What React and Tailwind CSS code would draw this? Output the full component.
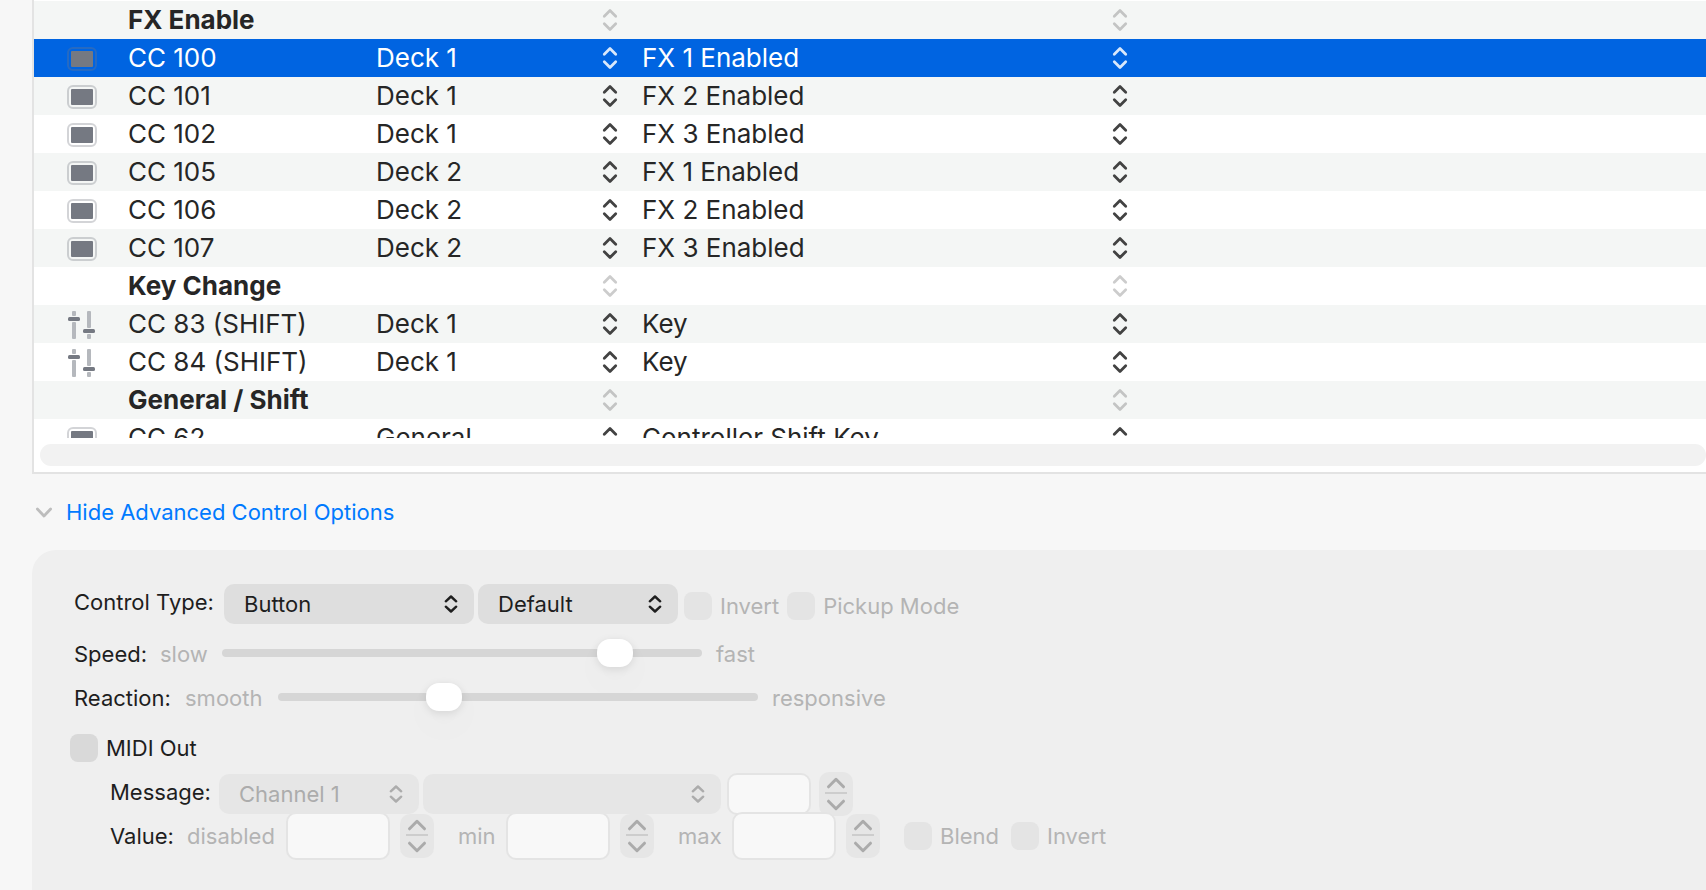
import { useState } from 'react'

const MAPPINGS = [
    { id: 'fx', group: 'FX Enable' },
    { id: 'cc100', icon: 'pad', name: 'CC 100', deck: 'Deck 1', action: 'FX 1 Enabled' },
    { id: 'cc101', icon: 'pad', name: 'CC 101', deck: 'Deck 1', action: 'FX 2 Enabled' },
    { id: 'cc102', icon: 'pad', name: 'CC 102', deck: 'Deck 1', action: 'FX 3 Enabled' },
    { id: 'cc105', icon: 'pad', name: 'CC 105', deck: 'Deck 2', action: 'FX 1 Enabled' },
    { id: 'cc106', icon: 'pad', name: 'CC 106', deck: 'Deck 2', action: 'FX 2 Enabled' },
    { id: 'cc107', icon: 'pad', name: 'CC 107', deck: 'Deck 2', action: 'FX 3 Enabled' },
    { id: 'key', group: 'Key Change' },
    { id: 'cc83', icon: 'fader', name: 'CC 83 (SHIFT)', deck: 'Deck 1', action: 'Key' },
    { id: 'cc84', icon: 'fader', name: 'CC 84 (SHIFT)', deck: 'Deck 1', action: 'Key' },
    { id: 'general', group: 'General / Shift' },
    { id: 'cc62', icon: 'pad', name: 'CC 62', deck: 'General', action: 'Controller Shift Key' },
]

function PadIcon() {
    return (
        <svg width="30" height="28" viewBox="0 0 30 28" className="block">
            <rect x="1" y="4" width="28" height="22" rx="5" fill="none" stroke="#757982" strokeOpacity="0.32" strokeWidth="2" />
            <rect x="4" y="7" width="22" height="16" rx="1" fill="#757982" />
        </svg>
    )
}

function FaderIcon() {
    return (
        <svg width="30" height="30" viewBox="0 0 30 30" className="block">
            <g fill="#b5b8bd">
                <rect x="5" y="2" width="4" height="5" rx="1" />
                <rect x="5" y="13" width="4" height="17" rx="1" />
                <rect x="20" y="2" width="4" height="17" rx="1" />
                <rect x="20" y="25" width="4" height="5" rx="1" />
            </g>
            <g fill="#757982">
                <rect x="1" y="8" width="12" height="4" rx="1.5" />
                <rect x="16" y="20" width="12" height="4" rx="1.5" />
            </g>
        </svg>
    )
}

// Up/down arrows at the end of a pop-up menu inside the table
function RowArrows({ className }) {
    return (
        <svg width="16" height="24" viewBox="0 0 16 24" fill="none" stroke="currentColor" strokeWidth="2.8" strokeLinecap="round" strokeLinejoin="round" className={className}>
            <path d="M2.3 8.2 8 2.6l5.7 5.6M2.3 15.8 8 21.4l5.7-5.600" />
        </svg>
    )
}

function MenuArrows({ className }) {
    return (
        <svg width="16" height="20" viewBox="0 0 16 20" fill="none" stroke="currentColor" strokeWidth="2.4" strokeLinecap="round" strokeLinejoin="round" className={className}>
            <path d="M2.8 7.3 8 2.5l5.2 4.8M2.8 12.7 8 17.5l5.2-4.8" />
        </svg>
    )
}

function RowSelect({ label, value, disabled, selected, className }) {
    const arrows = disabled ? 'text-black/20' : selected ? 'text-white/85' : 'text-[#424242]'
    return (
        <div className={`relative flex h-[38px] items-center ${className}`}>
            <select aria-label={label} disabled={disabled} className="h-full w-full appearance-none bg-transparent outline-none">
                <option>{value || ''}</option>
            </select>
            <RowArrows className={`pointer-events-none absolute right-0 ${arrows}`} />
        </div>
    )
}

function Menu({ label, value, disabled, className }) {
    return (
        <div className={`relative flex h-10 shrink-0 items-center rounded-[10px] ${disabled ? 'bg-[#e6e6e6] text-[#acacac]' : 'bg-[#dedede] text-[#1e1e1e]'} ${className}`}>
            <select aria-label={label} disabled={disabled} className="h-full w-full appearance-none bg-transparent pl-5 opacity-100 outline-none">
                <option>{value}</option>
            </select>
            <MenuArrows className="pointer-events-none absolute right-[15px]" />
        </div>
    )
}

function Check({ label, disabled }) {
    return (
        <label className={`flex items-center gap-2 ${disabled ? 'text-[#b4b4b4]' : ''}`}>
            <input
                type="checkbox"
                disabled={disabled}
                className={`size-7 shrink-0 appearance-none rounded-lg ${disabled ? 'bg-[#e4e4e4]' : 'bg-[#d9d9d9]'}`}
            />
            {label}
        </label>
    )
}

function Slider({ label, value, onChange }) {
    return (
        <input
            type="range"
            aria-label={label}
            min="0"
            max="1000"
            value={value}
            onChange={(e) => onChange(Number(e.target.value))}
            className="h-7 w-[480px] shrink-0 appearance-none bg-transparent [&::-webkit-slider-runnable-track]:h-2 [&::-webkit-slider-runnable-track]:rounded-full [&::-webkit-slider-runnable-track]:bg-[#d6d6d6] [&::-webkit-slider-thumb]:-mt-2.5 [&::-webkit-slider-thumb]:h-7 [&::-webkit-slider-thumb]:w-9 [&::-webkit-slider-thumb]:appearance-none [&::-webkit-slider-thumb]:rounded-[13px] [&::-webkit-slider-thumb]:bg-white [&::-webkit-slider-thumb]:shadow-[0_2px_8px_rgba(0,0,0,0.1),0_14px_40px_rgba(0,0,0,0.03)]"
        />
    )
}

function NumberBox({ label, className }) {
    return (
        <input
            type="text"
            aria-label={label}
            disabled
            className={`shrink-0 rounded-[10px] border-2 border-[#e4e4e4] bg-[#f8f8f8] px-2 ${className}`}
        />
    )
}

function Stepper({ label }) {
    return (
        <div className="flex h-11 w-[34px] shrink-0 flex-col items-center rounded-[10px] bg-[#e6e6e6] text-[#ababab]">
            <button disabled aria-label={`Increase ${label}`} className="flex flex-1 items-end pb-[3px]">
                <svg width="20" height="12" viewBox="0 0 20 12" fill="none" stroke="currentColor" strokeWidth="3" strokeLinecap="round" strokeLinejoin="round">
                    <path d="M2.5 9.8 10 2.3l7.5 7.5" />
                </svg>
            </button>
            <div className="h-0.5 w-[22px] bg-[#cdcdcd]" />
            <button disabled aria-label={`Decrease ${label}`} className="flex flex-1 items-start pt-[5px]">
                <svg width="20" height="12" viewBox="0 0 20 12" fill="none" stroke="currentColor" strokeWidth="3" strokeLinecap="round" strokeLinejoin="round">
                    <path d="M2.5 2.2 10 9.7l7.5-7.5" />
                </svg>
            </button>
        </div>
    )
}

function MappingTable({ selectedId, onSelect }) {
    return (
        <div className="border-b-2 border-l-2 border-[#e3e3e3] bg-white pb-1.5">
            <div className="h-[438px] overflow-hidden pt-px">
                <table className="w-full table-fixed border-collapse text-[26px] leading-[38px]">
                    <colgroup>
                        <col className="w-[94px]" />
                        <col className="w-[248px]" />
                        <col className="w-[266px]" />
                        <col />
                    </colgroup>
                    <tbody>
                        {MAPPINGS.map((row) => {
                            const selected = row.id === selectedId
                            return (
                                <tr
                                    key={row.id}
                                    onClick={() => onSelect(row.id)}
                                    className={`h-[38px] ${selected ? 'bg-[#0064e1] text-white' : 'text-[#262626] odd:bg-[#f4f6f5]'}`}
                                >
                                    <td className="p-0 pl-[33px]">
                                        {row.icon === 'pad' && <PadIcon />}
                                        {row.icon === 'fader' && <FaderIcon />}
                                    </td>
                                    <td className={`p-0 whitespace-nowrap ${row.group ? 'font-bold' : ''}`}>{row.group || row.name}</td>
                                    <td className="p-0">
                                        <RowSelect label="Deck" value={row.deck} disabled={!!row.group} selected={selected} className="w-[242px]" />
                                    </td>
                                    <td className="p-0">
                                        <RowSelect label="Action" value={row.action} disabled={!!row.group} selected={selected} className="w-[486px]" />
                                    </td>
                                </tr>
                            )
                        })}
                    </tbody>
                </table>
            </div>
            <div className="mt-1.5 ml-1.5 h-[22px] rounded-full bg-[#f2f2f2]" />
        </div>
    )
}

export default function App() {
    const [selectedId, setSelectedId] = useState('cc100')
    const [open, setOpen] = useState(true)
    const [speed, setSpeed] = useState(845)
    const [reaction, setReaction] = useState(333)

    return (
        <div className="flex min-h-screen flex-col overflow-hidden bg-[#f7f7f7] pl-8 font-['Inter','Liberation_Sans',sans-serif] text-[22px] leading-7 text-[#1e1e1e]">
            <MappingTable selectedId={selectedId} onSelect={setSelectedId} />

            <div className="flex h-[76px] items-center">
                <button onClick={() => setOpen(!open)} className="flex items-center gap-3 pl-0.5 text-[#007aff]">
                    <svg width="20" height="14" viewBox="0 0 20 14" fill="none" stroke="#bdbdbd" strokeWidth="2.8" strokeLinecap="round" strokeLinejoin="round">
                        <path d="M3.4 4 10 11l6.6-7" />
                    </svg>
                    Hide Advanced Control Options
                </button>
            </div>

            {open && (
                <div className="flex-1 rounded-tl-[24px] bg-[#efefef] pt-[34px] pb-8 pl-[42px] whitespace-nowrap">
                    <div className="flex h-10 items-center">
                        <span className="mb-1 w-[150px] shrink-0">Control Type:</span>
                        <Menu label="Control Type" value="Button" className="w-[250px]" />
                        <Menu label="Mode" value="Default" className="ml-1 w-[200px]" />
                        <div className="mt-1 ml-1.5 flex gap-2">
                            <Check label="Invert" disabled />
                            <Check label="Pickup Mode" disabled />
                        </div>
                    </div>

                    <div className="mt-[7px] flex h-11 items-center">
                        <span className="mt-0.5 w-[86px] shrink-0">Speed:</span>
                        <span className="mt-0.5 w-[62px] shrink-0 text-[#b4b4b4]">slow</span>
                        <Slider label="Speed" value={speed} onChange={setSpeed} />
                        <span className="mt-0.5 ml-3.5 text-[#b4b4b4]">fast</span>
                    </div>
                    <div className="flex h-11 items-center">
                        <span className="mt-0.5 w-[111px] shrink-0">Reaction:</span>
                        <span className="mt-0.5 w-[93px] shrink-0 text-[#b4b4b4]">smooth</span>
                        <Slider label="Reaction" value={reaction} onChange={setReaction} />
                        <span className="mt-0.5 ml-3.5 text-[#b4b4b4]">responsive</span>
                    </div>

                    <div className="mt-1 -ml-1 flex h-[50px] items-center">
                        <Check label="MIDI Out" />
                    </div>

                    <div className="flex h-[42px] items-center pl-9">
                        <span className="mb-1 w-[109px] shrink-0">Message:</span>
                        <Menu label="Channel" value="Channel 1" disabled className="w-[200px]" />
                        <Menu label="Message type" value="" disabled className="ml-1 w-[298px]" />
                        <NumberBox label="Message number" className="ml-1.5 h-[42px] w-[84px]" />
                        <div className="ml-2">
                            <Stepper label="message number" />
                        </div>
                    </div>
                    <div className="flex h-[42px] items-center pl-9 text-[#b4b4b4]">
                        <span className="w-[77px] shrink-0 text-[#1e1e1e]">Value:</span>
                        <span className="w-[99px] shrink-0">disabled</span>
                        <NumberBox label="Disabled value" className="mr-2.5 h-12 w-[104px]" />
                        <Stepper label="disabled value" />
                        <span className="ml-6 w-12 shrink-0">min</span>
                        <NumberBox label="Minimum value" className="mr-2.5 h-12 w-[104px]" />
                        <Stepper label="minimum value" />
                        <span className="ml-6 w-[54px] shrink-0">max</span>
                        <NumberBox label="Maximum value" className="mr-2.5 h-12 w-[104px]" />
                        <Stepper label="maximum value" />
                        <div className="ml-6 flex gap-3">
                            <Check label="Blend" disabled />
                            <Check label="Invert" disabled />
                        </div>
                    </div>
                </div>
            )}
        </div>
    )
}
